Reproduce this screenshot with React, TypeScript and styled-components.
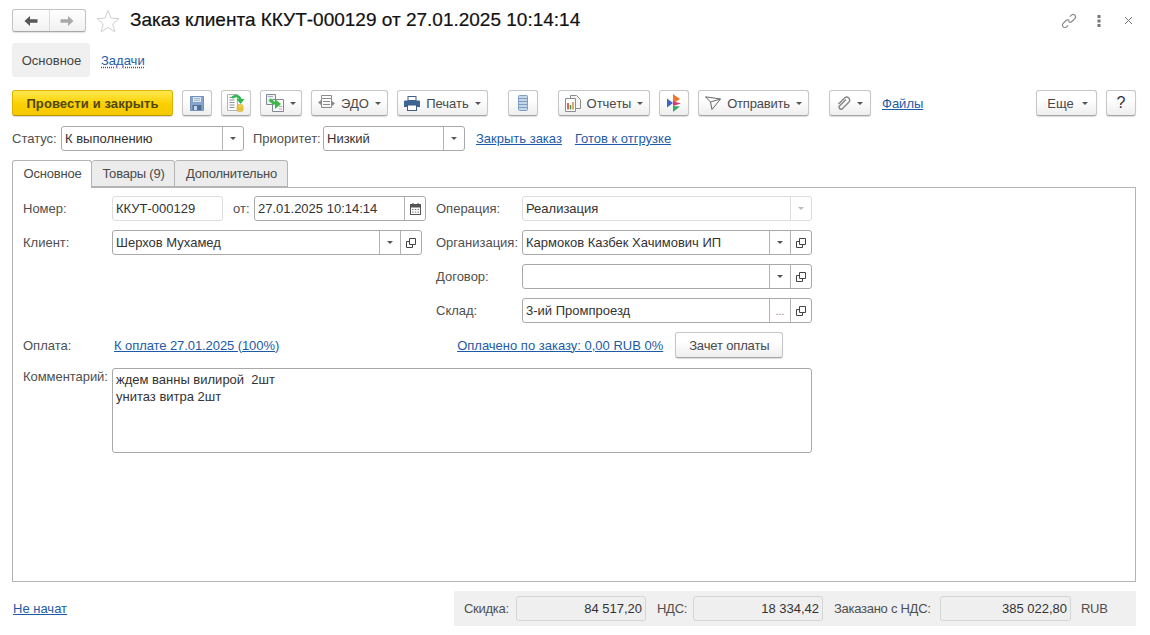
import { FC, ReactNode } from 'react';
import styled, { createGlobalStyle } from 'styled-components';

const GlobalStyle = createGlobalStyle`
  html, body {
    margin: 0;
    padding: 0;
    background: #fff;
  }
  body {
    font-family: "Liberation Sans", Arial, sans-serif;
    font-size: 12px;
    color: #4b4b4b;
  }
`;

const Page = styled.div`
  width: 1150px;
  height: 635px;
  padding: 9px 14px 0 12px;
  box-sizing: border-box;
  overflow: hidden;
  display: flex;
  flex-direction: column;
`;

/* шапка */
const Header = styled.header`
  display: flex;
  align-items: center;
  height: 23px;
`;

const NavGroup = styled.div`
  display: flex;
  width: 74px;
  height: 23px;
  box-sizing: border-box;
  border: 1px solid #c3c3c3;
  border-bottom-color: #a8a8a8;
  border-radius: 3px;
  background: linear-gradient(#fff, #f1f1f1);
  box-shadow: 0 1px 1px rgba(0, 0, 0, 0.12);
`;

const NavCell = styled.span<{ $divided?: boolean }>`
  flex: 1;
  display: flex;
  align-items: center;
  justify-content: center;
  border-left: ${(p) => (p.$divided ? '1px solid #dcdcdc' : 'none')};
`;

const StarBox = styled.span`
  display: flex;
  margin: 0 10px 0 10px;
`;

const Title = styled.h1`
  margin: 0 0 2px;
  font-size: 19px;
  font-weight: normal;
  color: #111;
  white-space: nowrap;
  -webkit-text-stroke: 0.2px #111;
`;

const WindowTools = styled.div`
  margin-left: auto;
  display: flex;
  align-items: center;
  gap: 20px;
  padding-right: 3px;
`;

const CloseBox = styled.span`
  display: flex;
  margin-left: 3px;
`;

/* разделы формы */
const SectionBar = styled.nav`
  display: flex;
  align-items: center;
  margin-top: 11px;
  height: 34px;
`;

const SectionActive = styled.span`
  width: 78px;
  height: 34px;
  display: flex;
  align-items: center;
  justify-content: center;
  padding-left: 1px;
  box-sizing: border-box;
  background: #f0f0f0;
  border-radius: 3px;
  font-size: 13px;
  color: #444;
`;

const SectionLink = styled.a`
  margin-left: 11px;
  font-size: 13px;
  color: #1d5ba8;
  text-decoration: underline dotted;
  text-underline-offset: 2px;
`;

/* командная панель */
const Toolbar = styled.div`
  display: flex;
  align-items: center;
  gap: 20px;
  margin-top: 13px;
  height: 26px;
`;

const ToolGroup = styled.div`
  display: flex;
  align-items: center;
  gap: 9px;
`;

const ToolGroupEnd = styled(ToolGroup)`
  margin-left: auto;
`;

const Button = styled.button<{ $w: number }>`
  width: ${(p) => p.$w}px;
  height: 26px;
  padding: 0;
  box-sizing: border-box;
  display: flex;
  align-items: center;
  justify-content: center;
  gap: 6px;
  border: 1px solid #c6c6c6;
  border-bottom-color: #a6a6a6;
  border-radius: 3px;
  background: linear-gradient(#fff 35%, #eeeeee);
  box-shadow: 0 1px 1px rgba(0, 0, 0, 0.14);
  font-family: inherit;
  font-size: 13px;
  color: #4a4a4a;
`;

const PrimaryButton = styled(Button)`
  border-color: #d9b400;
  border-bottom-color: #b89a00;
  background: linear-gradient(#ffe94f, #fbd000 55%, #f5c800);
  font-weight: bold;
  letter-spacing: 0.1px;
  color: #50470f;
`;

const SendButton = styled(Button)`
  letter-spacing: -0.2px;
`;

const MoreButton = styled(Button)`
  gap: 8px;
  padding-left: 2px;
`;

const HelpButton = styled(Button)`
  font-size: 16px;
  color: #333;
`;

const PaymentButton = styled(Button)`
  margin-left: 12px;
  letter-spacing: -0.15px;
`;

const Caret = styled.i<{ $muted?: boolean }>`
  display: inline-block;
  width: 0;
  height: 0;
  border-left: 3px solid transparent;
  border-right: 3px solid transparent;
  border-top: 3px solid ${(p) => (p.$muted ? '#bbb' : '#555')};
`;

const TextLink = styled.a<{ $ml?: number }>`
  margin-left: ${(p) => p.$ml ?? 0}px;
  font-size: 13px;
  color: #1d5ba8;
  text-decoration: underline;
  white-space: nowrap;
`;

const PayLink = styled(TextLink)`
  letter-spacing: -0.08px;
`;

/* статус */
const StatusRow = styled.div`
  display: flex;
  align-items: center;
  margin-top: 10px;
  height: 25px;
`;

const Caption = styled.span<{ $w?: number; $ml?: number }>`
  ${(p) => (p.$w ? `width: ${p.$w}px; flex: none;` : '')}
  margin-left: ${(p) => p.$ml ?? 0}px;
  font-size: 13px;
  color: #4f4f4f;
  white-space: nowrap;
`;

const TotalCaption = styled(Caption)`
  letter-spacing: -0.27px;
`;

const Field = styled.div<{ $w: number; $quiet?: boolean }>`
  width: ${(p) => p.$w}px;
  height: 25px;
  box-sizing: border-box;
  flex: none;
  display: flex;
  align-items: stretch;
  border: 1px solid ${(p) => (p.$quiet ? '#dddddd' : '#a9a9a9')};
  border-radius: 3px;
  background: #fff;
`;

const FieldText = styled.span`
  flex: 1;
  padding-left: 3px;
  line-height: 23px;
  font-size: 13px;
  color: #333;
  white-space: nowrap;
  overflow: hidden;
`;

const FieldCell = styled.span<{ $quiet?: boolean }>`
  width: 21px;
  box-sizing: border-box;
  flex: none;
  display: flex;
  align-items: center;
  justify-content: center;
  border-left: 1px solid ${(p) => (p.$quiet ? '#dddddd' : '#b4b4b4')};
  color: #888;
  font-size: 11px;
`;

/* закладки */
const TabStrip = styled.div`
  display: flex;
  margin-top: 9px;
  height: 27px;
  position: relative;
  z-index: 1;
`;

const Tab = styled.div<{ $w: number; $active?: boolean }>`
  width: ${(p) => p.$w}px;
  height: ${(p) => (p.$active ? 28 : 27)}px;
  box-sizing: border-box;
  display: flex;
  align-items: center;
  justify-content: center;
  padding: ${(p) => (p.$active ? '0 0 2px 1px' : '0 0 0 1px')};
  border: 1px solid #b4b4b4;
  border-left-width: ${(p) => (p.$active ? 1 : 0)}px;
  border-bottom: ${(p) => (p.$active ? 'none' : '1px solid #b4b4b4')};
  border-radius: 3px 3px 0 0;
  background: ${(p) => (p.$active ? '#fff' : '#ececec')};
  font-size: 13px;
  letter-spacing: -0.2px;
  color: #4a4a4a;
`;

const Panel = styled.section`
  width: 1124px;
  height: 395px;
  box-sizing: border-box;
  border: 1px solid #b4b4b4;
  padding: 8px 0 0 10px;
`;

const FormColumns = styled.div`
  display: flex;
  gap: 10px;
`;

const FormColumn = styled.div<{ $w: number }>`
  width: ${(p) => p.$w}px;
  display: flex;
  flex-direction: column;
  gap: 9px;
`;

const FormRow = styled.div`
  display: flex;
  align-items: center;
  height: 25px;
`;

const PaymentRow = styled.div`
  display: flex;
  align-items: center;
  height: 26px;
  margin-top: 9px;
`;

const CommentRow = styled.div`
  display: flex;
  align-items: flex-start;
  margin-top: 10px;
`;

const CommentCaption = styled(Caption)`
  padding-top: 1px;
  letter-spacing: -0.05px;
`;

const CommentBox = styled.div`
  width: 700px;
  height: 85px;
  box-sizing: border-box;
  border: 1px solid #a9a9a9;
  border-radius: 3px;
  padding: 2px 3px;
  font-size: 13px;
  line-height: 17px;
  color: #333;
  white-space: pre-wrap;
`;

/* подвал */
const Footer = styled.footer`
  display: flex;
  align-items: center;
  justify-content: space-between;
  margin-top: 9px;
  height: 35px;
  width: 1124px;
`;

const Totals = styled.div`
  width: 682px;
  height: 35px;
  box-sizing: border-box;
  padding-left: 10px;
  display: flex;
  align-items: center;
  background: #f0f0f0;
`;

const TotalValue = styled.div<{ $w: number; $ml: number }>`
  width: ${(p) => p.$w}px;
  height: 25px;
  margin-left: ${(p) => p.$ml}px;
  flex: none;
  box-sizing: border-box;
  padding-right: 3px;
  border: 1px solid #d5d5d5;
  border-radius: 3px;
  background: #efefef;
  line-height: 23px;
  text-align: right;
  font-size: 13px;
  color: #333;
`;

/* иконки */
const ArrowBack: FC = () => (
  <svg width="14" height="12" viewBox="0 0 14 12">
    <path d="M0.5 6 6 1v3.2h7.5v3.6H6V11z" fill="#555" />
  </svg>
);

const ArrowForward: FC = () => (
  <svg width="14" height="12" viewBox="0 0 14 12">
    <path d="M13.5 6 8 1v3.2H.5v3.6H8V11z" fill="#a9a9a9" />
  </svg>
);

const StarIcon: FC = () => (
  <svg width="24" height="24" viewBox="0 0 24 24">
    <path d="M12 1.5l3 7.6 8 .6-6.2 5.2 2 7.9L12 18.5l-6.8 4.3 2-7.9L1 9.7l8-.6z" fill="none" stroke="#cfcfcf" />
  </svg>
);

const LinkIcon: FC = () => (
  <svg width="16" height="16" viewBox="0 0 16 16" fill="none" stroke="#8a8a8a" strokeWidth="1.2">
    <path d="M9 3.6l1.4-1.4a2.4 2.4 0 0 1 3.4 3.4L10.9 8.5a2.4 2.4 0 0 1-3.4 0" />
    <path d="M7 12.4l-1.4 1.4a2.4 2.4 0 0 1-3.4-3.4l2.9-2.9a2.4 2.4 0 0 1 3.4 0" />
  </svg>
);

const DotsIcon: FC = () => (
  <svg width="4" height="12" viewBox="0 0 4 12" fill="#777">
    <rect x="0.5" y="0" width="3" height="3" />
    <rect x="0.5" y="4.5" width="3" height="3" />
    <rect x="0.5" y="9" width="3" height="3" />
  </svg>
);

const CloseIcon: FC = () => (
  <svg width="9" height="9" viewBox="0 0 9 9" stroke="#777" strokeWidth="1">
    <path d="M1 1l7 7M8 1L1 8" />
  </svg>
);

const SaveIcon: FC = () => (
  <svg width="14" height="15" viewBox="0 0 14 15">
    <path d="M.5.5h13v14H.5z" fill="#86a5cb" stroke="#7192bb" />
    <rect x="3" y="1" width="8" height="5" fill="#dfe8f2" />
    <path d="M4 2.500h6M4 4.300h6" stroke="#9db6d3" />
    <rect x="2.500" y="9" width="9" height="5" fill="#4e6f9c" />
    <rect x="4" y="10" width="3" height="4" fill="#c6d5e6" />
  </svg>
);

const PostIcon: FC = () => (
  <svg width="18" height="18" viewBox="0 0 18 18">
    <path d="M.5.5h10v16H.5z" fill="#fdfdfd" stroke="#b4b4b4" />
    <path d="M2.500 3.500h5M2.500 6h5M2.500 8.500h5M2.500 11h5M2.500 13.500h5" stroke="#8a9199" />
    <path d="M5 4C7 1 12 1 13.500 5.500" fill="none" stroke="#2fb84e" strokeWidth="2.500" />
    <path d="M9.500 5h8l-4 5z" fill="#2fb84e" />
    <path d="M10 11.500c0-1.300 6-1.300 6 0v5c0 1.300-6 1.300-6 0z" fill="#f0cd4d" stroke="#c9a227" strokeWidth="0.5" />
    <path d="M10 13.300c1 .8 5 .8 6 0M10 15c1 .8 5 .8 6 0" stroke="#c9a227" strokeWidth="0.5" fill="none" />
  </svg>
);

const RelatedIcon: FC = () => (
  <svg width="18" height="18" viewBox="0 0 18 18">
    <path d="M.5.5h9v10h-9z" fill="#eef1f4" stroke="#7e8a96" />
    <path d="M2 2.500h5" stroke="#a4adb6" />
    <path d="M6.500 5.500h11v12h-11z" fill="#fbfbfb" stroke="#7e8a96" />
    <path d="M13 12.500h3M13 15h3" stroke="#a4adb6" />
    <path d="M3.500 5.500L9 10" fill="none" stroke="#3fb84a" strokeWidth="3" />
    <path d="M9 5l6 5-6 5z" fill="#3fb84a" />
  </svg>
);

const EdoIcon: FC = () => (
  <svg width="17" height="16" viewBox="0 0 17 16" fill="none" stroke="#8c8c8c">
    <path d="M3.500.5h10v3h-10zM3.500 3.500v9h10v-9" />
    <path d="M5 6.500h7M5 9.500h7" />
    <path d="M0 7.500l3-2.500v5zM17 8.500l-3-2.500v5z" fill="#8c8c8c" stroke="none" />
  </svg>
);

const PrintIcon: FC = () => (
  <svg width="16" height="15" viewBox="0 0 16 15">
    <rect x="4" y="0.5" width="8" height="4" fill="#fff" stroke="#3f5f86" />
    <path d="M1 4.500h14a1 1 0 0 1 1 1V11h-3v-1H3v1H0V5.500a1 1 0 0 1 1-1z" fill="#3f6691" />
    <rect x="3.500" y="9" width="9" height="5.500" fill="#fff" stroke="#3f5f86" />
  </svg>
);

const ListIcon: FC = () => (
  <svg width="10" height="16" viewBox="0 0 10 16">
    <rect x="0.500" y="0.500" width="9" height="15" rx="1" fill="#c4d7ea" stroke="#7c9ec2" />
    <path d="M1 3.500h8M1 6.500h8M1 9.500h8M1 12.500h8" stroke="#7c9ec2" />
  </svg>
);

const ReportIcon: FC = () => (
  <svg width="16" height="17" viewBox="0 0 16 17">
    <path d="M5.500.5h6l4 4v9h-10z" fill="#f5f5f5" stroke="#8c8c8c" />
    <path d="M.5 3.500h10v13H.5z" fill="#fff" stroke="#8c8c8c" />
    <path d="M3 8v6.500" stroke="#c0392b" strokeWidth="1.500" />
    <path d="M5.500 10v4.500" stroke="#2e9e4f" strokeWidth="1.500" />
    <path d="M8 7v7.500" stroke="#d98a2b" strokeWidth="1.500" />
  </svg>
);

const BrandIcon: FC = () => (
  <svg width="15" height="18" viewBox="0 0 15 18">
    <path d="M6 0l7 5-4.500 3L6 6z" fill="#f0762b" />
    <path d="M0 4.500l6 4.500-6 4.500z" fill="#3f63c9" />
    <path d="M6 6l2.500 2L14 9.500 6 12z" fill="#d8396f" />
    <path d="M6 12l7 .5L6 18z" fill="#34ad5e" />
  </svg>
);

const SendIcon: FC = () => (
  <svg width="16" height="14" viewBox="0 0 16 14" fill="none" stroke="#666">
    <path d="M.5.8L15.500 3 7 13.500 5.500 6z" />
    <path d="M5.500 6l10-3" />
  </svg>
);

const ClipIcon: FC = () => (
  <svg width="14" height="14" viewBox="0 0 14 14" fill="none" stroke="#8a8a8a" strokeWidth="1.500">
    <path d="M9 2.500L2.500 9a2 2 0 0 0 2.800 2.800L12 5a3 3 0 0 0-4.200-4.200L1.500 7" transform="translate(0 1)" />
  </svg>
);

const CalendarIcon: FC = () => (
  <svg width="11" height="12" viewBox="0 0 11 12">
    <path d="M3 0v2M8 0v2" stroke="#444" />
    <rect x="0.500" y="1.500" width="10" height="10" fill="#fff" stroke="#555" />
    <rect x="0.500" y="1.500" width="10" height="3" fill="#555" />
    <path d="M2 6.500h1.500M4.800 6.500h1.500M7.500 6.500H9M2 9h1.500M4.800 9h1.500M7.500 9H9" stroke="#777" />
  </svg>
);

const OpenIcon: FC = () => (
  <svg width="10" height="10" viewBox="0 0 10 10" fill="none" stroke="#444">
    <path d="M3.500.5h6v6h-6z" />
    <path d="M3.500 3.500h-3v6h6v-3" />
  </svg>
);

const DropCell: FC<{ quiet?: boolean }> = ({ quiet }) => (
  <FieldCell $quiet={quiet}>
    <Caret $muted={quiet} />
  </FieldCell>
);

const OpenCell: FC = () => (
  <FieldCell>
    <OpenIcon />
  </FieldCell>
);

const ToolButton: FC<{ w: number; children: ReactNode }> = ({ w, children }) => <Button $w={w}>{children}</Button>;

export default function App() {
  return (
    <>
      <GlobalStyle />
      <Page>
        <Header>
          <NavGroup>
            <NavCell>
              <ArrowBack />
            </NavCell>
            <NavCell $divided>
              <ArrowForward />
            </NavCell>
          </NavGroup>
          <StarBox>
            <StarIcon />
          </StarBox>
          <Title>Заказ клиента ККУТ-000129 от 27.01.2025 10:14:14</Title>
          <WindowTools>
            <LinkIcon />
            <DotsIcon />
            <CloseBox>
              <CloseIcon />
            </CloseBox>
          </WindowTools>
        </Header>

        <SectionBar>
          <SectionActive>Основное</SectionActive>
          <SectionLink>Задачи</SectionLink>
        </SectionBar>

        <Toolbar>
          <ToolGroup>
            <PrimaryButton $w={161}>Провести и закрыть</PrimaryButton>
            <ToolButton w={30}>
              <SaveIcon />
            </ToolButton>
            <ToolButton w={30}>
              <PostIcon />
            </ToolButton>
            <ToolButton w={42}>
              <RelatedIcon />
              <Caret />
            </ToolButton>
            <ToolButton w={77}>
              <EdoIcon />
              ЭДО
              <Caret />
            </ToolButton>
            <ToolButton w={91}>
              <PrintIcon />
              Печать
              <Caret />
            </ToolButton>
          </ToolGroup>
          <ToolGroup>
            <ToolButton w={30}>
              <ListIcon />
            </ToolButton>
          </ToolGroup>
          <ToolGroup>
            <ToolButton w={92}>
              <ReportIcon />
              Отчеты
              <Caret />
            </ToolButton>
            <ToolButton w={30}>
              <BrandIcon />
            </ToolButton>
            <SendButton $w={111}>
              <SendIcon />
              Отправить
              <Caret />
            </SendButton>
          </ToolGroup>
          <ToolGroup>
            <ToolButton w={42}>
              <ClipIcon />
              <Caret />
            </ToolButton>
            <TextLink $ml={2}>Файлы</TextLink>
          </ToolGroup>
          <ToolGroupEnd>
            <MoreButton $w={61}>
              Еще
              <Caret />
            </MoreButton>
            <HelpButton $w={30}>?</HelpButton>
          </ToolGroupEnd>
        </Toolbar>

        <StatusRow>
          <Caption $w={49}>Статус:</Caption>
          <Field $w={183}>
            <FieldText>К выполнению</FieldText>
            <DropCell />
          </Field>
          <Caption $w={70} $ml={9}>
            Приоритет:
          </Caption>
          <Field $w={142}>
            <FieldText>Низкий</FieldText>
            <DropCell />
          </Field>
          <TextLink $ml={11}>Закрыть заказ</TextLink>
          <TextLink $ml={13}>Готов к отгрузке</TextLink>
        </StatusRow>

        <TabStrip>
          <Tab $w={80} $active>
            Основное
          </Tab>
          <Tab $w={83}>Товары (9)</Tab>
          <Tab $w={113}>Дополнительно</Tab>
        </TabStrip>

        <Panel>
          <FormColumns>
            <FormColumn $w={403}>
              <FormRow>
                <Caption $w={89}>Номер:</Caption>
                <Field $w={111} $quiet>
                  <FieldText>ККУТ-000129</FieldText>
                </Field>
                <Caption $w={21} $ml={10}>
                  от:
                </Caption>
                <Field $w={172}>
                  <FieldText>27.01.2025 10:14:14</FieldText>
                  <FieldCell>
                    <CalendarIcon />
                  </FieldCell>
                </Field>
              </FormRow>
              <FormRow>
                <Caption $w={89}>Клиент:</Caption>
                <Field $w={310}>
                  <FieldText>Шерхов Мухамед</FieldText>
                  <DropCell />
                  <OpenCell />
                </Field>
              </FormRow>
            </FormColumn>
            <FormColumn $w={376}>
              <FormRow>
                <Caption $w={86}>Операция:</Caption>
                <Field $w={290} $quiet>
                  <FieldText>Реализация</FieldText>
                  <DropCell quiet />
                </Field>
              </FormRow>
              <FormRow>
                <Caption $w={86}>Организация:</Caption>
                <Field $w={290}>
                  <FieldText>Кармоков Казбек Хачимович ИП</FieldText>
                  <DropCell />
                  <OpenCell />
                </Field>
              </FormRow>
              <FormRow>
                <Caption $w={86}>Договор:</Caption>
                <Field $w={290}>
                  <FieldText />
                  <DropCell />
                  <OpenCell />
                </Field>
              </FormRow>
              <FormRow>
                <Caption $w={86}>Склад:</Caption>
                <Field $w={290}>
                  <FieldText>3-ий Промпроезд</FieldText>
                  <FieldCell>...</FieldCell>
                  <OpenCell />
                </Field>
              </FormRow>
            </FormColumn>
          </FormColumns>

          <PaymentRow>
            <Caption $w={91}>Оплата:</Caption>
            <PayLink>К оплате 27.01.2025 (100%)</PayLink>
            <TextLink $ml={178}>Оплачено по заказу: 0,00 RUB 0%</TextLink>
            <PaymentButton $w={108}>Зачет оплаты</PaymentButton>
          </PaymentRow>

          <CommentRow>
            <CommentCaption $w={89}>Комментарий:</CommentCaption>
            <CommentBox>{'ждем ванны вилирой  2шт\nунитаз витра 2шт'}</CommentBox>
          </CommentRow>
        </Panel>

        <Footer>
          <TextLink $ml={1}>Не начат</TextLink>
          <Totals>
            <TotalCaption $w={46}>Скидка:</TotalCaption>
            <TotalValue $w={130} $ml={6}>
              84 517,20
            </TotalValue>
            <TotalCaption $w={30} $ml={11}>
              НДС:
            </TotalCaption>
            <TotalValue $w={130} $ml={6}>
              18 334,42
            </TotalValue>
            <TotalCaption $w={96} $ml={11}>
              Заказано с НДС:
            </TotalCaption>
            <TotalValue $w={131} $ml={10}>
              385 022,80
            </TotalValue>
            <TotalCaption $ml={10}>RUB</TotalCaption>
          </Totals>
        </Footer>
      </Page>
    </>
  );
}
